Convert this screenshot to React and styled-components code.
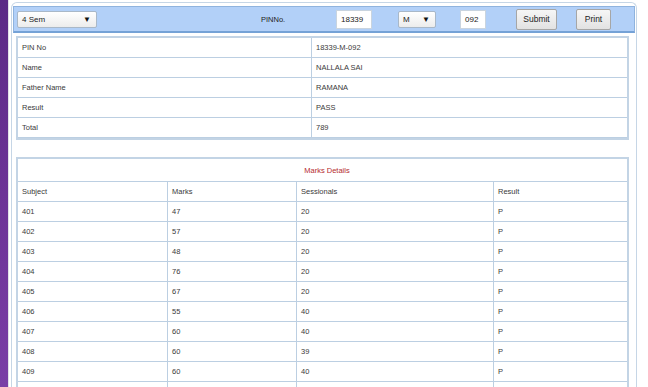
import React from 'react'
import styled, { createGlobalStyle } from 'styled-components';

const GlobalStyle = createGlobalStyle`
    html, body {
        margin:0;
        padding:0;
        background:#ffffff;
        font-family:"Liberation Sans", Arial, sans-serif;
        color:#333333;
    }
`;

const info = [
    ["PIN No", "18339-M-092"],
    ["Name", "NALLALA SAI"],
    ["Father Name", "RAMANA"],
    ["Result", "PASS"],
    ["Total", "789"],
];

const marks = [
    ["401", "47", "20", "P"],
    ["402", "57", "20", "P"],
    ["403", "48", "20", "P"],
    ["404", "76", "20", "P"],
    ["405", "67", "20", "P"],
    ["406", "55", "40", "P"],
    ["407", "60", "40", "P"],
    ["408", "60", "39", "P"],
    ["409", "60", "40", "P"],
];

const App = () => {
  return (
    <>
        <GlobalStyle />
        <Page>
            <SideStrip />
            <Panel>
                <Toolbar>
                    <SelectBox width={80} ml={3}>
                        <span>4 Sem</span>
                        <Arrow>▼</Arrow>
                    </SelectBox>
                    <Label>PINNo.</Label>
                    <TextBox width={36} ml={0}>18339</TextBox>
                    <SelectBox width={38} ml={26}>
                        <span>M</span>
                        <Arrow>▼</Arrow>
                    </SelectBox>
                    <TextBox width={26} ml={24}>092</TextBox>
                    <Button width={41} ml={30}>Submit</Button>
                    <Button width={35} ml={19}>Print</Button>
                </Toolbar>

                <InfoTable>
                    <colgroup>
                        <col style={{ width: 294 }} />
                        <col />
                    </colgroup>
                    <tbody>
                        {info.map((row, index) => (
                            <tr key={index}>
                                <Cell>{row[0]}</Cell>
                                <Cell last>{row[1]}</Cell>
                            </tr>
                        ))}
                    </tbody>
                </InfoTable>

                <MarksTable>
                    <colgroup>
                        <col style={{ width: 150 }} />
                        <col style={{ width: 129 }} />
                        <col style={{ width: 197 }} />
                        <col />
                    </colgroup>
                    <tbody>
                        <tr>
                            <TitleCell colSpan={4}>Marks Details</TitleCell>
                        </tr>
                        <tr>
                            <Cell>Subject</Cell>
                            <Cell>Marks</Cell>
                            <Cell>Sessionals</Cell>
                            <Cell last>Result</Cell>
                        </tr>
                        {marks.map((row, index) => (
                            <tr key={index}>
                                <Cell>{row[0]}</Cell>
                                <Cell>{row[1]}</Cell>
                                <Cell>{row[2]}</Cell>
                                <Cell last>{row[3]}</Cell>
                            </tr>
                        ))}
                        <tr>
                            <Cell />
                            <Cell />
                            <Cell />
                            <Cell last />
                        </tr>
                    </tbody>
                </MarksTable>
            </Panel>
        </Page>
    </>
  )
}

const Page = styled.div`
    display:flex;
    height:387px;
    overflow:hidden;
    gap:2px;
    background:#ffffff;
`;

const SideStrip = styled.div`
    width:8px;
    flex-shrink:0;
    background:linear-gradient(180deg, #5b2a86 0%, #6c3396 50%, #7a3ea6 100%);
    border-right:1px solid #e2e2e8;
`;

const Panel = styled.div`
    width:626px;
    box-sizing:border-box;
    margin-top:2px;
    border:1px solid #c6d6e6;
    border-bottom:none;
    border-radius:6px 6px 0 0;
    padding:3px 1px 0 1px;
    display:flex;
    flex-direction:column;
`;

const Toolbar = styled.div`
    height:27px;
    flex-shrink:0;
    box-sizing:border-box;
    display:flex;
    align-items:center;
    background:#b2d0f8;
    border:1px solid #8fb3de;
    border-bottom:2px solid #75a2d6;
    font-size:8px;
    color:#222;
`;

const SelectBox = styled.div`
    width:${p => p.width}px;
    margin-left:${p => p.ml}px;
    height:17px;
    box-sizing:border-box;
    display:flex;
    align-items:center;
    justify-content:space-between;
    padding:0 5px 0 4px;
    background:linear-gradient(180deg, #ffffff 0%, #ececec 100%);
    border:1px solid #a9b8c8;
    border-radius:2px;
`;

const Arrow = styled.span`
    font-size:8px;
    color:#111;
`;

const Label = styled.div`
    width:75px;
    margin-left:164px;
    font-size:7.5px;
`;

const TextBox = styled.div`
    width:${p => p.width}px;
    margin-left:${p => p.ml}px;
    height:19px;
    box-sizing:border-box;
    display:flex;
    align-items:center;
    padding-left:4px;
    background:#ffffff;
    border:1px solid #c9d4df;
`;

const Button = styled.div`
    width:${p => p.width}px;
    margin-left:${p => p.ml}px;
    height:21px;
    box-sizing:border-box;
    display:flex;
    align-items:center;
    justify-content:center;
    background:linear-gradient(180deg, #f6f6f6 0%, #e2e2e2 100%);
    border:1px solid #a6a6a6;
    border-radius:2px;
    font-size:8.5px;
`;

const InfoTable = styled.table`
    width:613px;
    flex-shrink:0;
    table-layout:fixed;
    margin:3px 0 0 3px;
    border-collapse:separate;
    border-spacing:0;
    border:2px solid #c3d4e5;
    font-size:7.5px;
    tr{
        height:20px;
    }
`;

const MarksTable = styled(InfoTable)`
    margin-top:17px;
`;

const Cell = styled.td`
    padding:0 0 0 4px;
    border-bottom:1px solid #bccfe2;
    border-right:${p => (p.last ? 'none' : '1px solid #bccfe2')};
    vertical-align:middle;
    color:#3a3a3a;
    white-space:nowrap;
    overflow:hidden;
`;

const TitleCell = styled.td`
    height:20px;
    text-align:center;
    color:#b52a2e;
    border-bottom:1px solid #bccfe2;
    padding-left:10px;
`;

export default App
